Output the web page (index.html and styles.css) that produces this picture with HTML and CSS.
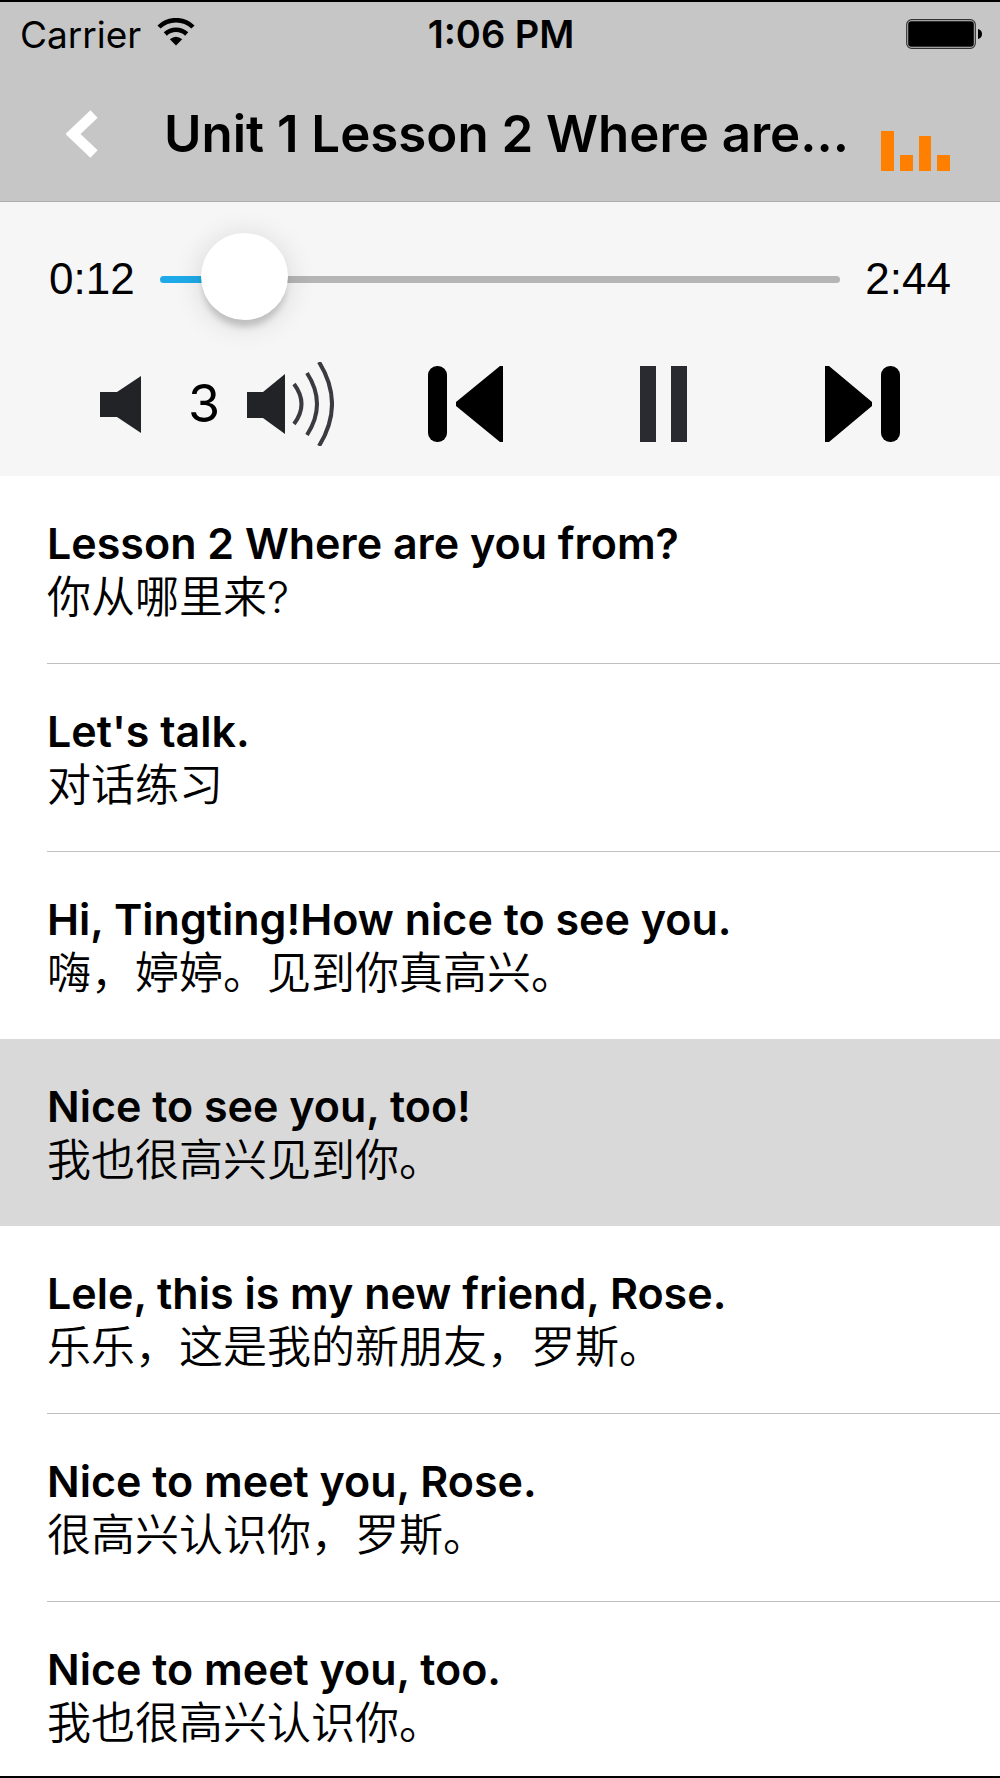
FILE: index.html
```
<!DOCTYPE html>
<html lang="en">
<head>
  <meta charset="UTF-8" />
  <meta name="viewport" content="width=device-width, initial-scale=1.0"/>
  <title>Unit 1 Lesson 2</title>
  <link rel="stylesheet" href="styles.css">
</head>
<body>

  <header class="header">
    <div class="status-bar">
      <div class="carrier">
        <span>Carrier</span>
        <svg class="wifi" viewBox="0 0 38 28" aria-hidden="true">
          <path d="M2 9 A24.500 24.500 0 0 1 36 9" fill="none" stroke="#000" stroke-width="4.500"/>
          <path d="M8.300 16 A15.500 15.500 0 0 1 29.700 16" fill="none" stroke="#000" stroke-width="4.500"/>
          <path d="M12.800 21.200 Q19 16.200 25.200 21.200 L19 27.500 Z"/>
        </svg>
      </div>
      <div class="clock">1:06 PM</div>
      <div class="battery">
        <svg viewBox="0 0 76 30" aria-hidden="true">
          <rect x="0.700" y="0.700" width="68.600" height="28.600" rx="5" fill="none" stroke="#333" stroke-width="1.200"/>
          <rect x="2.200" y="2.200" width="65.600" height="25.600" rx="3"/>
          <path d="M72 10 Q76 11 76 15 Q76 19 72 20 Z"/>
        </svg>
      </div>
    </div>

    <div class="title-bar">
      <button class="back-btn" aria-label="Back">
        <svg viewBox="0 0 32 48" aria-hidden="true">
          <path d="M28 4 L7 24 L28 44" fill="none" stroke="#fff" stroke-width="10.500"/>
        </svg>
      </button>
      <h1>Unit 1 Lesson 2 Where are…</h1>
      <button class="bars-btn" aria-label="Now playing">
        <svg viewBox="0 0 69 40" aria-hidden="true">
          <path d="M0 0h13v40H0z M19 24h13v16H19z M38 5h12v35H38z M56 24h13v16H56z" fill="#ff8000"/>
        </svg>
      </button>
    </div>
  </header>

  <section class="player">
    <div class="progress">
      <span class="time">0:12</span>
      <input type="range" class="slider" min="0" max="164" step="0.5" value="11.5" aria-label="Position">
      <span class="time">2:44</span>
    </div>

    <div class="controls">
      <div class="volume">
        <button class="vol-down" aria-label="Volume down">
          <svg viewBox="0 0 41 57" aria-hidden="true">
            <path d="M0 16 H17 L41 0 V57 L17 41 H0 Z" fill="#222327"/>
          </svg>
        </button>
        <span class="level">3</span>
        <button class="vol-up" aria-label="Volume up">
          <svg viewBox="0 0 87 84" aria-hidden="true">
            <path d="M0 30 H16 L38 12 V72 L16 56 H0 Z" fill="#222327"/>
            <path d="M47 22 Q62 42 47 62 M60 11 Q80 42 60 73 M72 0 Q98 42 72 84" fill="none" stroke="#3a3b40" stroke-width="4"/>
          </svg>
        </button>
      </div>

      <div class="transport">
        <button class="skip-btn" aria-label="Previous">
          <svg viewBox="0 0 75 76" aria-hidden="true">
            <rect x="0" y="0" width="19" height="76" rx="9"/>
            <path d="M75 0 V76 H72 L28 40 V36 L72 0 Z"/>
          </svg>
        </button>
        <button class="pause-btn" aria-label="Pause">
          <svg viewBox="0 0 48 76" aria-hidden="true">
            <path d="M0 0h16v76H0z M31 0h16v76H31z" fill="#2a2b30"/>
          </svg>
        </button>
        <button class="skip-btn" aria-label="Next">
          <svg viewBox="0 0 75 76" aria-hidden="true">
            <path d="M0 0 V76 H4 L47 40 V36 L4 0 Z"/>
            <rect x="56" y="0" width="19" height="76" rx="9"/>
          </svg>
        </button>
      </div>
    </div>
  </section>

  <ul class="phrases">
    <li>
      <button class="phrase">
        <span class="en">Lesson 2 Where are you from?</span>
        <span class="zh" lang="zh-CN">你从哪里来?</span>
      </button>
    </li>
    <li>
      <button class="phrase">
        <span class="en">Let's talk.</span>
        <span class="zh" lang="zh-CN">对话练习</span>
      </button>
    </li>
    <li>
      <button class="phrase no-line">
        <span class="en">Hi, Tingting!How nice to see you.</span>
        <span class="zh" lang="zh-CN">嗨，婷婷。见到你真高兴。</span>
      </button>
    </li>
    <li class="active">
      <button class="phrase no-line">
        <span class="en">Nice to see you, too!</span>
        <span class="zh" lang="zh-CN">我也很高兴见到你。</span>
      </button>
    </li>
    <li>
      <button class="phrase">
        <span class="en">Lele, this is my new friend, Rose.</span>
        <span class="zh" lang="zh-CN">乐乐，这是我的新朋友，罗斯。</span>
      </button>
    </li>
    <li>
      <button class="phrase">
        <span class="en">Nice to meet you, Rose.</span>
        <span class="zh" lang="zh-CN">很高兴认识你，罗斯。</span>
      </button>
    </li>
    <li>
      <button class="phrase">
        <span class="en">Nice to meet you, too.</span>
        <span class="zh" lang="zh-CN">我也很高兴认识你。</span>
      </button>
    </li>
  </ul>

</body>
</html>
```
FILE: styles.css
```
* { margin: 0; padding: 0; box-sizing: border-box; }

body {
  height: 100vh;
  display: flex;
  flex-direction: column;
  overflow: hidden;
  background: white;
  color: #000;
  font-family: Inter, "Noto Sans CJK SC", sans-serif;
  border-top: 2px solid #000;
  border-bottom: 2px solid #000;
}

button {
  background: none;
  border: none;
  font: inherit;
  color: inherit;
  cursor: pointer;
}

svg { display: block; width: 100%; }

/* header */
.header {
  background: #c6c6c6;
  border-bottom: 1px solid #adadad;
}

.status-bar {
  display: grid;
  grid-template-columns: 1fr auto 1fr;
  align-items: center;
  height: 64px;
  padding: 0 18px 0 20px;
  font-size: 37px;
}

.carrier { display: flex; align-items: center; gap: 16px; }
.wifi { width: 38px; margin-bottom: 4px; }
.clock { font-size: 38px; font-weight: 600; }
.battery { width: 76px; justify-self: end; }

.title-bar {
  display: flex;
  align-items: center;
  height: 135px;
  padding: 0 50px 0 66px;
}

.back-btn { width: 32px; }

.title-bar h1 {
  flex: 1;
  margin-left: 66px;
  font-size: 51px;
  font-weight: 600;
  white-space: nowrap;
}

.bars-btn { width: 69px; margin-top: 34px; }

/* player */
.player {
  background: #f6f6f6;
  padding: 33px 49px 30px;
}

.progress {
  display: flex;
  align-items: center;
  gap: 25px;
  height: 88px;
}

.time {
  font-family: "Liberation Sans", Arial, sans-serif;
  font-size: 44px;
}

.slider {
  flex: 1;
  min-width: 0;
  height: 88px;
  -webkit-appearance: none;
  appearance: none;
  background: none;
}

.slider::-webkit-slider-runnable-track {
  height: 7px;
  border-radius: 4px;
  background: linear-gradient(to right, #1eaae8 12%, #b5b5b5 12%);
}

.slider::-webkit-slider-thumb {
  -webkit-appearance: none;
  width: 87px;
  height: 87px;
  margin-top: -43px;
  border-radius: 50%;
  background: white;
  box-shadow: 0 9px 6px -2px rgba(0,0,0,0.16), 0 4px 30px rgba(0,0,0,0.14);
}

.controls {
  display: flex;
  align-items: center;
  gap: 94px;
  margin-top: 39px;
  padding: 0 51px;
}

.volume { display: flex; align-items: center; gap: 27px; }
.vol-down { width: 41px; margin-right: 20px; }
.vol-up { width: 87px; }
.level { font-size: 52px; line-height: 60px; }

.transport {
  flex: 1;
  display: flex;
  align-items: center;
  justify-content: space-between;
}

.skip-btn { width: 75px; }
.pause-btn { width: 48px; }

/* phrase list */
.phrases {
  flex: 1;
  min-height: 0;
  overflow-y: auto;
  scrollbar-width: none;
  list-style: none;
}

.phrases li { padding-left: 47px; }
.phrases li.active { background: #d9d9d9; }

.phrase {
  display: block;
  box-sizing: content-box;
  width: 100%;
  height: 187px;
  text-align: left;
  border-bottom: 1px solid #c0c0c2;
}

.phrase.no-line { border-bottom: none; }

.phrase span { display: block; line-height: 54px; }
.en { font-size: 43px; font-weight: 600; }
.zh { font-size: 44px; font-weight: 350; }
```
